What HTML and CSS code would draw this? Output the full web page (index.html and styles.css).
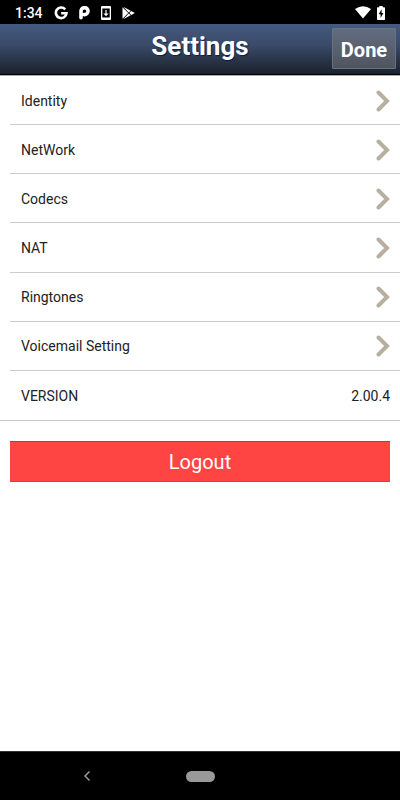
FILE: index.html
```html
<!DOCTYPE html>
<html lang="en">
<head>
<meta charset="utf-8">
<meta name="viewport" content="width=device-width, initial-scale=1">
<title>Settings</title>
<link rel="stylesheet" href="styles.css">
</head>
<body>
<div class="status">
  <span class="clock">1:34</span>
  <div class="notifications">
    <svg width="14" height="14" viewBox="0 0 14 14" aria-hidden="true"><path d="M11.200 3.300A5.300 5.300 0 1 0 12.500 7.200H7.200" fill="none" stroke="#fff" stroke-width="2.600"/></svg>
    <svg width="11" height="14" viewBox="0 0 11 14" aria-hidden="true"><path d="M2 11.700V5.200A3.500 3.500 0 1 1 5.500 8.600H5" fill="none" stroke="#fff" stroke-width="3.600" stroke-linecap="round"/></svg>
    <svg width="10" height="14" viewBox="0 0 10 14" aria-hidden="true"><path fill="#fff" fill-rule="evenodd" d="M1 0h8a1 1 0 0 1 1 1v12a1 1 0 0 1-1 1H1a1 1 0 0 1-1-1V1a1 1 0 0 1 1-1zM1.300 2.500v9h7.400v-9zM4.400 4h1.200v3.400h2L5 10.200 2.400 7.400h2z"/></svg>
    <svg width="13" height="14" viewBox="0 0 13 14" aria-hidden="true"><path d="M.5 1.200v11.600L6.300 7z" fill="#fff"/><path d="M1.200 .8l7.500 3.900L6.700 6.600zM1.200 13.200l7.500-3.900-2-1.900zM9.300 5.100L12.800 7 9.300 8.900 7.400 7z" fill="#fff"/></svg>
  </div>
  <div class="system">
    <svg width="16" height="13" viewBox="0 0 16 13" aria-hidden="true"><path d="M0 3Q8-2.600 16 3L8 12.500z" fill="#fff"/></svg>
    <svg width="8" height="14" viewBox="0 0 8 14" aria-hidden="true"><path d="M2.300 0h3.400v1.300H7.300q.7 0 .7.700v11.300q0 .7-.7.700H.7Q0 14 0 13.300V2q0-.7.700-.7h1.600z" fill="#fff"/><path d="M4.600 3.300L1.700 8.200h1.900v3.700l2.800-5H4.600z" fill="#000"/></svg>
  </div>
</div>
<header class="bar">
  <h1>Settings</h1>
  <button class="done" type="button">Done</button>
</header>
<main>
  <ul class="list">
    <li><a href="#identity">Identity<svg class="chevron" viewBox="0 0 14 22" aria-hidden="true"><path d="M2.500 2.500L11 11 2.500 19.500"/></svg></a></li>
    <li><a href="#network">NetWork<svg class="chevron" viewBox="0 0 14 22" aria-hidden="true"><path d="M2.500 2.500L11 11 2.500 19.500"/></svg></a></li>
    <li><a href="#codecs">Codecs<svg class="chevron" viewBox="0 0 14 22" aria-hidden="true"><path d="M2.500 2.500L11 11 2.500 19.500"/></svg></a></li>
    <li><a href="#nat">NAT<svg class="chevron" viewBox="0 0 14 22" aria-hidden="true"><path d="M2.500 2.500L11 11 2.500 19.500"/></svg></a></li>
    <li><a href="#ringtones">Ringtones<svg class="chevron" viewBox="0 0 14 22" aria-hidden="true"><path d="M2.500 2.500L11 11 2.500 19.500"/></svg></a></li>
    <li><a href="#voicemail">Voicemail Setting<svg class="chevron" viewBox="0 0 14 22" aria-hidden="true"><path d="M2.500 2.500L11 11 2.500 19.500"/></svg></a></li>
    <li class="version"><span>VERSION</span><span>2.00.4</span></li>
  </ul>
  <button class="logout" type="button">Logout</button>
</main>
<nav class="nav">
  <button class="back" type="button" aria-label="Back"><svg width="8" height="12" viewBox="0 0 8 12" aria-hidden="true"><path d="M6.500 1.500L2 6 6.500 10.500" fill="none" stroke="#999" stroke-width="1.500"/></svg></button>
  <button class="home" type="button" aria-label="Home"></button>
</nav>
</body>
</html>
```
FILE: styles.css
```css
* { box-sizing: border-box; }
body {
  margin: 0;
  min-height: 100vh;
  display: flex;
  flex-direction: column;
  background: #fff;
  color: #222;
  font-family: Roboto, "Liberation Sans", sans-serif;
}
button { font: inherit; border: 0; padding: 0; margin: 0; background: none; }
svg { display: block; }
.status {
  height: 24px;
  padding: 1px 15px 0;
  display: flex;
  align-items: center;
  background: #000;
  color: #fff;
}
.clock { font-size: 14px; font-weight: 500; line-height: 22px; }
.notifications { display: flex; align-items: center; gap: 11px; margin-left: 11px; }
.system { display: flex; align-items: center; gap: 6px; margin-left: auto; }
.bar {
  height: 51px;
  padding: 4px;
  display: grid;
  grid-template-columns: 1fr auto 1fr;
  background: linear-gradient(#455a80, #3b4b69 40%, #1a212d);
  border-bottom: 1px solid #000;
  color: #fff;
}
.bar h1 {
  grid-column: 2;
  margin: 0;
  font-size: 26px;
  line-height: 36px;
  font-weight: 700;
  text-shadow: 1px 1px 1px #0b1c4c;
}
.done {
  justify-self: end;
  width: 64px;
  height: 41px;
  padding-top: 2px;
  border: 1px solid #687181;
  border-radius: 1px;
  background: linear-gradient(#626d80, #50545e);
  color: #fff;
  font-size: 20px;
  font-weight: 700;
}
main { flex: 1; }
.list {
  list-style: none;
  margin: 0;
  padding: 0;
  min-height: 346px;
  display: grid;
  grid-auto-rows: 1fr;
  border-top: 1px solid #aaa;
  border-bottom: 1px solid #c8c8c8;
  font-size: 14px;
}
.list li {
  display: flex;
  margin-left: 10px;
  border-bottom: 1px solid #ccc;
}
.list a, .list .version {
  flex: 1;
  display: flex;
  align-items: center;
  justify-content: space-between;
  padding: 1px 10px 0 11px;
  color: inherit;
  text-decoration: none;
}
.list .version { border-bottom: 0; }
.chevron { width: 14px; height: 22px; fill: none; stroke: #b7b0a1; stroke-width: 4; stroke-linecap: round; }
.logout {
  display: block;
  width: calc(100% - 20px);
  height: 41px;
  margin: 20px 10px;
  background: #ff4444;
  box-shadow: inset 0 1px #ff1c1c, inset 0 -1px #ff3030;
  color: #fff;
  font-size: 20px;
}
.nav {
  height: 49px;
  display: grid;
  grid-template-columns: 1fr auto 1fr;
  align-items: center;
  background: #000;
  border-top: 1px solid #333;
}
.back { justify-self: center; margin-left: -12px; }
.home { width: 29px; height: 11px; border-radius: 6px; background: #999; }
```
